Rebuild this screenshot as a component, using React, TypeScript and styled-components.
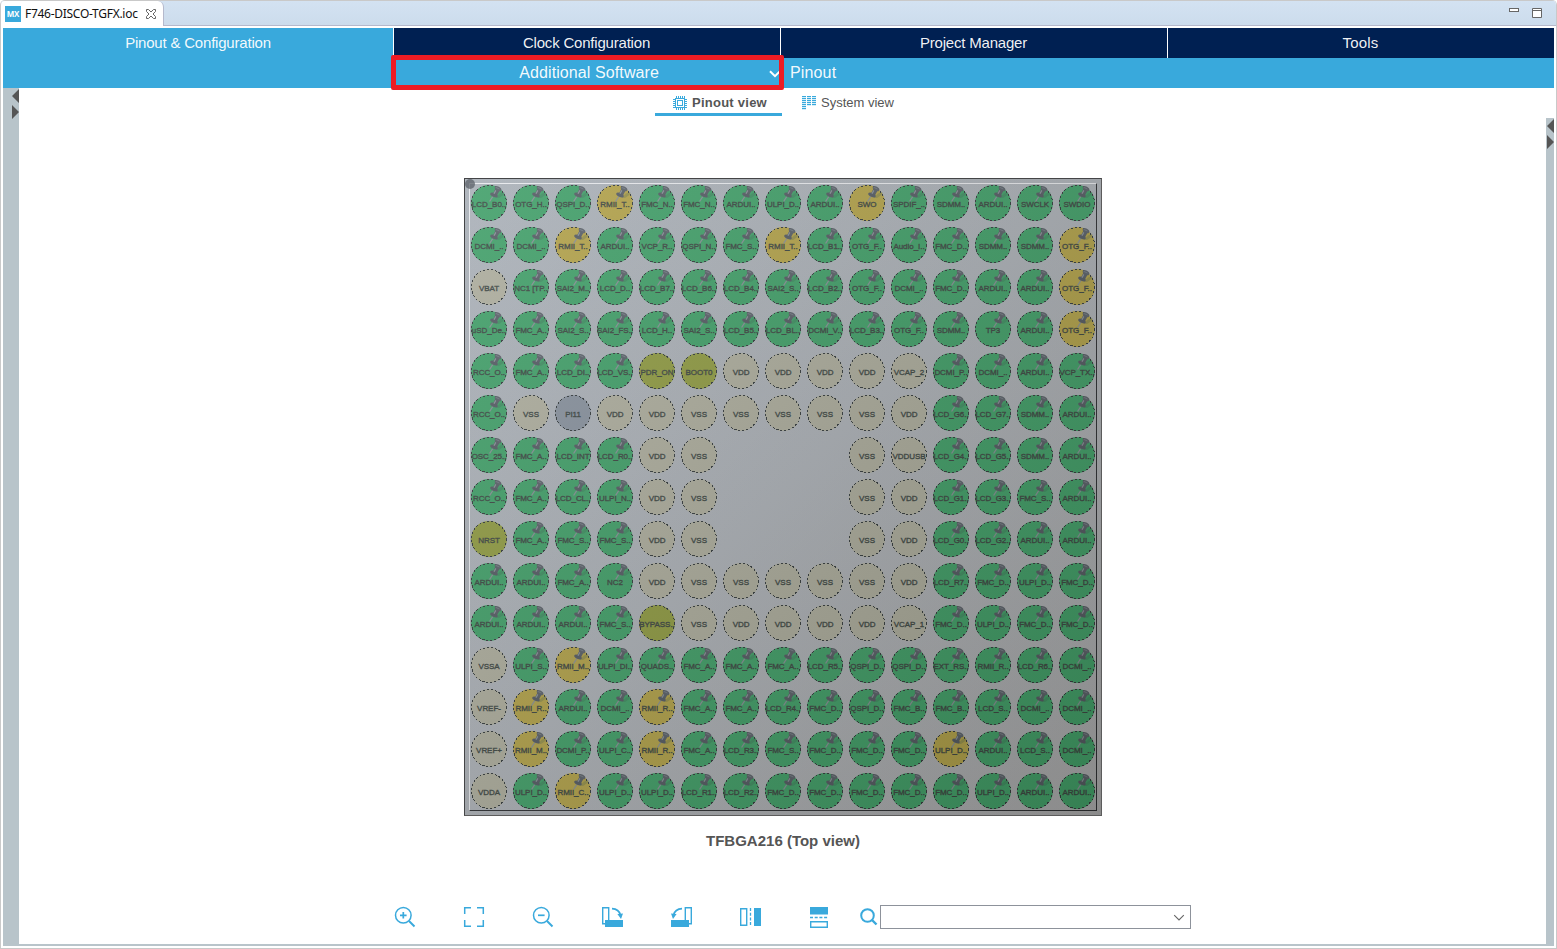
import React from 'react';
import styled, { createGlobalStyle } from 'styled-components';

const BLUE = '#39a9dc';
const NAVY = '#002052';
const RAIL = '#b8c4ca';

const GlobalStyle = createGlobalStyle`
  * { box-sizing: border-box; }
  html, body { margin: 0; padding: 0; height: 100%; background: #fff; overflow: hidden; }
  body { font-family: "Liberation Sans", Arial, sans-serif; }
  #root { height: 100%; }
  svg { display: block; flex: none; }
`;

const Frame = styled.div`
  width: 1557px;
  height: 949px;
  display: flex;
  flex-direction: column;
  border: 1px solid #c9c9c9;
  border-top: 0;
  border-radius: 5px 5px 0 0;
  background: #fff;
  overflow: hidden;
`;

const TabStrip = styled.header`
  height: 26px;
  flex: none;
  display: flex;
  align-items: flex-start;
  justify-content: space-between;
  border-top: 1px solid #c9c9c9;
  border-bottom: 1px solid #b5b9cc;
  background: linear-gradient(#d3e2f2, #ccdcec);
`;

const FileTab = styled.div`
  width: 163px;
  height: 25px;
  display: flex;
  align-items: center;
  padding-left: 4px;
  border-right: 1px solid #b5b9cc;
  border-radius: 4px 6px 0 0;
  background: #fff;
  font: 12px/24px "Noto Sans", sans-serif;
  letter-spacing: -0.28px;
  color: #111;
  white-space: nowrap;
`;

const FileLogo = styled.span`
  width: 16px;
  height: 16px;
  margin-right: 4px;
  flex: none;
  background: ${BLUE};
  color: #fff;
  font: bold 8px/16px "Open Sans", sans-serif;
  letter-spacing: -0.2px;
  text-align: center;
`;

const FileName = styled.span`
  width: 120px;
`;

const WindowButtons = styled.div`
  display: flex;
  gap: 13px;
  padding: 7px 14px 0 0;
`;

const Content = styled.div`
  flex: 1;
  display: flex;
  flex-direction: column;
  margin: 2px 2px 2px 2px;
  border-bottom: 2px solid ${RAIL};
  position: relative;
`;

const MainNav = styled.nav`
  height: 30px;
  flex: none;
  display: grid;
  grid-template-columns: 390px 386px 386px 386px;
  column-gap: 1px;
`;

const NavItem = styled.div<{ $active?: boolean }>`
  background: ${(p) => (p.$active ? BLUE : NAVY)};
  color: rgba(255, 255, 255, 0.94);
  font-size: 15px;
  line-height: 30px;
  letter-spacing: -0.2px;
  text-align: center;
  padding-right: ${(p) => (p.$active ? 0 : 1)}px;

  &:last-child {
    letter-spacing: 0.2px;
  }
`;

const SubNav = styled.div`
  height: 30px;
  flex: none;
  display: grid;
  grid-template-columns: 390px 387px 1fr;
  background: ${BLUE};
  color: rgba(255, 255, 255, 0.96);
  font-size: 16px;
  line-height: 29px;
`;

const SubMenu = styled.div`
  height: 29px;
  display: flex;
  align-items: center;
  justify-content: flex-end;
  gap: 110px;
  letter-spacing: 0.1px;
  overflow: hidden;

  svg {
    margin-top: 3px;
  }
`;

const SubLabel = styled.div`
  padding-left: 10px;
  letter-spacing: 0.15px;
`;

const Highlight = styled.div`
  position: absolute;
  left: 388px;
  top: 27px;
  width: 393px;
  height: 35px;
  border: 5px solid #ed1c24;
  border-radius: 2px;
`;

const Body = styled.div`
  flex: 1;
  display: flex;
`;

const Rail = styled.aside<{ $right?: boolean }>`
  width: ${(p) => (p.$right ? 8 : 16)}px;
  margin-top: ${(p) => (p.$right ? 30 : 0)}px;
  flex: none;
  display: flex;
  justify-content: flex-end;
  background: ${RAIL};
`;

const Main = styled.main`
  flex: 1;
  display: flex;
  flex-direction: column;
  align-items: center;
`;

const ViewTabs = styled.div`
  width: 1527px;
  height: 28px;
  padding-left: 636px;
  display: flex;
  gap: 2px;
`;

const ViewTab = styled.div<{ $active?: boolean }>`
  width: ${(p) => (p.$active ? 127 : 130)}px;
  height: 28px;
  display: flex;
  align-items: center;
  gap: 5px;
  padding: 5px 0 0 18px;
  border-bottom: 3px solid ${(p) => (p.$active ? BLUE : 'transparent')};
  color: #555;
  font-size: 13px;
  line-height: 20px;
  font-weight: ${(p) => (p.$active ? 'bold' : 'normal')};
  letter-spacing: ${(p) => (p.$active ? 0.25 : 0)}px;
`;

const Chip = styled.div`
  width: 638px;
  height: 638px;
  margin: 62px 0 0 1px;
  padding: 4px;
  border: 1px solid #444547;
  border-right-color: #5c5c5c;
  border-bottom-color: #5c5c5c;
  background: linear-gradient(135deg, #aeb5ba 0%, #b2b7bb 50%, #b3b3b3 100%);
  position: relative;
`;

const BallGrid = styled.div`
  width: 628px;
  height: 628px;
  padding: 1px 0 0 1px;
  display: grid;
  grid-template-columns: repeat(15, 36px);
  grid-auto-rows: 36px;
  gap: 6px;
  border: 1px solid;
  border-color: #eff1f2 #2c2e30 #2c2e30 #eff1f2;
`;

const CornerMark = styled.div`
  position: absolute;
  left: 0;
  top: 0;
  width: 10px;
  height: 10px;
  border-radius: 50%;
  background: rgba(75, 81, 87, 0.75);
`;

const Shade = styled.div`
  position: absolute;
  inset: 0;
  background: linear-gradient(135deg, rgba(200, 200, 220, 0.14) 0%, rgba(20, 20, 20, 0.25) 100%);
  pointer-events: none;
`;

type Kind = 'pinned' | 'warn' | 'power' | 'system' | 'free';

const FILL: Record<Kind, string> = {
  pinned: '#41a468',
  warn: '#b8a748',
  power: '#b2b29f',
  system: '#939f40',
  free: '#8b959f',
};

const Ball = styled.div<{ $kind: Kind }>`
  position: relative;
  width: 36px;
  height: 36px;
  border-radius: 50%;
  background: ${(p) => FILL[p.$kind]};
`;

const Outline = styled.svg`
  position: absolute;
  inset: 0;
`;

const PinMark = styled.svg`
  position: absolute;
  left: 17px;
  top: 0;
`;

const BallLabel = styled.span`
  position: absolute;
  left: -1px;
  top: 13.5px;
  width: 38px;
  height: 11px;
  display: flex;
  justify-content: center;
  overflow: hidden;
  color: #3c463f;
  font-size: 8px;
  line-height: 11px;
  letter-spacing: -0.05px;
  -webkit-text-stroke: 0.35px #3c463f;
  white-space: nowrap;
`;

const ChipName = styled.div`
  margin: 16px 0 0 1px;
  color: #555;
  font-size: 15px;
  line-height: 18px;
  font-weight: bold;
`;

const Toolbar = styled.div`
  width: 1527px;
  height: 24px;
  margin-top: 55px;
  padding-left: 375px;
  display: flex;
  align-items: center;
`;

const ToolButton = styled.div`
  width: 69px;
  height: 22px;
`;

const SearchIcon = styled.div`
  width: 21px;
  padding: 0 0 0 1px;
  margin-left: -18px;
`;

const SearchBox = styled.div`
  width: 311px;
  height: 24px;
  display: flex;
  align-items: center;
  justify-content: flex-end;
  padding: 1px 5px 0 0;
  border: 1px solid #8d929b;
  background: #fff;
`;

/* Marks after a label: "!" = conflicting signal, "*" = supply, "~" = system, "?" = unused, "-" = no ball */
const ROWS = [
  'LCD_B0..,OTG_H..,QSPI_D..,RMII_T..!,FMC_N..,FMC_N..,ARDUI..,ULPI_D..,ARDUI..,SWO!,SPDIF_..,SDMM..,ARDUI..,SWCLK,SWDIO',
  'DCMI_..,DCMI_..,RMII_T..!,ARDUI..,VCP_R..,QSPI_N..,FMC_S..,RMII_T..!,LCD_B1..,OTG_F..,Audio_I..,FMC_D..,SDMM..,SDMM..,OTG_F..!',
  'VBAT*,NC1 [TP..,SAI2_M..,LCD_D..,LCD_B7..,LCD_B6..,LCD_B4..,SAI2_S..,LCD_B2..,OTG_F..,DCMI_..,FMC_D..,ARDUI..,ARDUI..,OTG_F..!',
  'uSD_De..,FMC_A..,SAI2_S..,SAI2_FS..,LCD_H..,SAI2_S..,LCD_B5..,LCD_BL..,DCMI_V..,LCD_B3..,OTG_F..,SDMM..,TP3,ARDUI..,OTG_F..!',
  'RCC_O..,FMC_A..,LCD_DI..,LCD_VS..,PDR_ON~,BOOT0~,VDD*,VDD*,VDD*,VDD*,VCAP_2*,DCMI_P..,DCMI_..,ARDUI..,VCP_TX..',
  'RCC_O..,VSS*,PI11?,VDD*,VDD*,VSS*,VSS*,VSS*,VSS*,VSS*,VDD*,LCD_G6..,LCD_G7..,SDMM..,ARDUI..',
  'OSC_25..,FMC_A..,LCD_INT,LCD_R0..,VDD*,VSS*,-,-,-,VSS*,VDDUSB*,LCD_G4..,LCD_G5..,SDMM..,ARDUI..',
  'RCC_O..,FMC_A..,LCD_CL..,ULPI_N..,VDD*,VSS*,-,-,-,VSS*,VDD*,LCD_G1..,LCD_G3..,FMC_S..,ARDUI..',
  'NRST~,FMC_A..,FMC_S..,FMC_S..,VDD*,VSS*,-,-,-,VSS*,VDD*,LCD_G0..,LCD_G2..,ARDUI..,ARDUI..',
  'ARDUI..,ARDUI..,FMC_A..,NC2,VDD*,VSS*,VSS*,VSS*,VSS*,VSS*,VDD*,LCD_R7..,FMC_D..,ULPI_D..,FMC_D..',
  'ARDUI..,ARDUI..,ARDUI..,FMC_S..,BYPASS..~,VSS*,VDD*,VDD*,VDD*,VDD*,VCAP_1*,FMC_D..,ULPI_D..,FMC_D..,FMC_D..',
  'VSSA*,ULPI_S..,RMII_M..!,ULPI_DI..,QUADS..,FMC_A..,FMC_A..,FMC_A..,LCD_R5..,QSPI_D..,QSPI_D..,EXT_RS..,RMII_R..,LCD_R6..,DCMI_..',
  'VREF-*,RMII_R..!,ARDUI..,DCMI_..,RMII_R..!,FMC_A..,FMC_A..,LCD_R4..,FMC_D..,QSPI_D..,FMC_B..,FMC_B..,LCD_S..,DCMI_..,DCMI_..',
  'VREF+*,RMII_M..!,DCMI_P..,ULPI_C..,RMII_R..!,FMC_A..,LCD_R3..,FMC_S..,FMC_D..,FMC_D..,FMC_D..,ULPI_D..!,ARDUI..,LCD_S..,DCMI_..',
  'VDDA*,ULPI_D..,RMII_C..!,ULPI_D..,ULPI_D..,LCD_R1..,LCD_R2..,FMC_D..,FMC_D..,FMC_D..,FMC_D..,FMC_D..,ULPI_D..,ARDUI..,ARDUI..',
];

const MARKS: Record<string, Kind> = { '!': 'warn', '*': 'power', '~': 'system', '?': 'free' };

function ChipBall({ code }: { code: string }) {
  if (code === '-') return <span />;
  const mark = MARKS[code.slice(-1)];
  const kind: Kind = mark ?? 'pinned';
  const label = mark ? code.slice(0, -1) : code;
  return (
    <Ball $kind={kind}>
      <Outline width="36" height="36">
        <circle cx="18" cy="18" r="17.5" fill="none" stroke="#343b3b" strokeWidth="1" strokeDasharray="2 2" shapeRendering="crispEdges" />
      </Outline>
      {(kind === 'pinned' || kind === 'warn') && (
        <PinMark width="18" height="18" viewBox="0 0 18 18">
          <path d="M8 12.5 L12 8.5 L16.5 7 L16 9.5 L11 13 Z" fill="#3b5a4a" opacity=".25" />
          <path d="M4.8 11.5 L1.6 16.5" stroke="#8b9297" strokeWidth="1.3" />
          <path d="M7.6 3.6 L11.6 5.4 L8.8 10.8 L4.8 8.8 Z" fill="#596066" />
          <ellipse cx="6" cy="10" rx="4" ry="2" transform="rotate(24 6 10)" fill="#555c62" />
          <ellipse cx="10" cy="3.6" rx="3.6" ry="2" transform="rotate(30 10 3.6)" fill="#5c6369" />
          <path d="M7.8 5.4 L6 8.8" stroke="#8c949a" strokeWidth="1.2" />
          <path d="M7.6 2.3 L11.4 4" stroke="#767e85" strokeWidth="1" />
        </PinMark>
      )}
      <BallLabel>{label}</BallLabel>
    </Ball>
  );
}

function RailArrows() {
  return (
    <svg width="8" height="32" viewBox="0 0 8 32">
      <path d="M8 1 L1 8 L8 15 Z M1 17 L8 24 L1 31 Z" fill="#555" />
    </svg>
  );
}

function ChipIcon() {
  return (
    <svg width="14" height="14" viewBox="0 0 14 14" fill="none" stroke={BLUE} shapeRendering="crispEdges">
      <rect x="2.5" y="2.5" width="9" height="9" />
      <rect x="4.5" y="4.5" width="5" height="5" />
      <path d="M3.5 0v2M5.5 0v2M7.5 0v2M9.5 0v2M11.5 0v2M3.5 12v2M5.5 12v2M7.5 12v2M9.5 12v2M11.5 12v2M0 3.5h2M0 5.5h2M0 7.5h2M0 9.5h2M0 11.5h2M12 3.5h2M12 5.5h2M12 7.5h2M12 9.5h2M12 11.5h2" />
    </svg>
  );
}

function SystemIcon() {
  const columns = [
    { x: 0, rows: 7 },
    { x: 5, rows: 5 },
    { x: 10, rows: 5 },
  ];
  return (
    <svg width="14" height="14" viewBox="0 0 14 14">
      {columns.flatMap(({ x, rows }) =>
        Array.from({ length: rows }, (_, i) => (
          <rect key={`${x}-${i}`} x={x} y={i * 2} width="4" height="1.2" fill={BLUE} />
        )),
      )}
    </svg>
  );
}

function ZoomIcon({ plus }: { plus?: boolean }) {
  return (
    <svg width="22" height="22" viewBox="0 0 22 22" fill="none" stroke={BLUE} strokeWidth="1.5">
      <circle cx="9.3" cy="9.3" r="7.8" />
      <path d="M15 15 L20.5 20.5" strokeWidth="1.9" />
      <path d={plus ? 'M6 9.3h6.6M9.3 6v6.6' : 'M6 9.3h6.6'} strokeWidth="1.7" />
    </svg>
  );
}

function FitIcon() {
  return (
    <svg width="22" height="22" viewBox="0 0 22 22" fill="none" stroke={BLUE} strokeWidth="1.5">
      <path d="M1.7 8V1.7H8M14 1.7h6.3V8M20.3 14v6.3H14M8 20.3H1.7V14" />
    </svg>
  );
}

function RotateIcon({ left }: { left?: boolean }) {
  return (
    <svg width="23" height="22" viewBox="0 0 23 22">
      <g transform={left ? 'translate(23 0) scale(-1 1)' : undefined}>
        <path d="M1.7 1.7h6v16h-6z" fill="none" stroke={BLUE} strokeWidth="1.4" />
        <path d="M4 14h18v7H4z" fill={BLUE} />
        <path d="M11 2.6 Q18 3 19.5 9" fill="none" stroke={BLUE} strokeWidth="1.6" />
        <path d="M16.4 8 L22 7.4 L20 13 Z" fill={BLUE} />
      </g>
    </svg>
  );
}

function FlipHIcon() {
  return (
    <svg width="23" height="22" viewBox="0 0 23 22">
      <path d="M1.7 2.7h6v16.6h-6z" fill="none" stroke={BLUE} strokeWidth="1.4" />
      <path d="M11.5 2v18" stroke={BLUE} strokeWidth="1.3" strokeDasharray="3 1.7" />
      <path d="M15 2h7v18h-7z" fill={BLUE} />
    </svg>
  );
}

function FlipVIcon() {
  return (
    <svg width="22" height="23" viewBox="0 0 22 23">
      <path d="M2 1h18v7.5H2z" fill={BLUE} />
      <path d="M2 11.5h18" stroke={BLUE} strokeWidth="1.3" strokeDasharray="3 1.7" />
      <path d="M2.7 15.7h16.6v5.6H2.7z" fill="none" stroke={BLUE} strokeWidth="1.4" />
    </svg>
  );
}

export default function App() {
  return (
    <>
      <GlobalStyle />
      <Frame>
        <TabStrip>
          <FileTab>
            <FileLogo>MX</FileLogo>
            <FileName>F746-DISCO-TGFX.ioc</FileName>
            <svg width="12" height="12" viewBox="0 0 12 12" fill="#fff" stroke="#666" strokeWidth="1">
              <path d="M1.5 1.5h2L6 4l2.5-2.5h2v2L8 6l2.5 2.5v2h-2L6 8l-2.5 2.5h-2v-2L4 6 1.5 3.5z" />
            </svg>
          </FileTab>
          <WindowButtons>
            <svg width="10" height="10" viewBox="0 0 10 10">
              <rect x=".5" y=".5" width="9" height="3" fill="#fff" stroke="#666" />
            </svg>
            <svg width="10" height="10" viewBox="0 0 10 10">
              <path d="M.5.5h9v9h-9zM.5 2.5h9" fill="#fff" stroke="#666" />
            </svg>
          </WindowButtons>
        </TabStrip>
        <Content>
          <MainNav>
            <NavItem $active>Pinout &amp; Configuration</NavItem>
            <NavItem>Clock Configuration</NavItem>
            <NavItem>Project Manager</NavItem>
            <NavItem>Tools</NavItem>
          </MainNav>
          <SubNav>
            <span />
            <SubMenu>
              Additional Software
              <svg width="11" height="8" viewBox="0 0 11 8" fill="none" stroke="#fff" strokeWidth="2">
                <path d="M1 1.2 L6 6.2 L11 1.2" />
              </svg>
            </SubMenu>
            <SubLabel>Pinout</SubLabel>
          </SubNav>
          <Body>
            <Rail>
              <RailArrows />
            </Rail>
            <Main>
              <ViewTabs>
                <ViewTab $active>
                  <ChipIcon />
                  Pinout view
                </ViewTab>
                <ViewTab>
                  <SystemIcon />
                  System view
                </ViewTab>
              </ViewTabs>
              <Chip>
                <CornerMark />
                <BallGrid>
                  {ROWS.flatMap((row, r) => row.split(',').map((code, c) => <ChipBall key={`${r}-${c}`} code={code} />))}
                </BallGrid>
                <Shade />
              </Chip>
              <ChipName>TFBGA216 (Top view)</ChipName>
              <Toolbar>
                <ToolButton><ZoomIcon plus /></ToolButton>
                <ToolButton><FitIcon /></ToolButton>
                <ToolButton><ZoomIcon /></ToolButton>
                <ToolButton><RotateIcon /></ToolButton>
                <ToolButton><RotateIcon left /></ToolButton>
                <ToolButton><FlipHIcon /></ToolButton>
                <ToolButton><FlipVIcon /></ToolButton>
                <SearchIcon>
                  <svg width="18" height="18" viewBox="0 0 18 18" fill="none" stroke={BLUE} strokeWidth="2">
                    <circle cx="7.5" cy="7.5" r="6.3" />
                    <path d="M12 12 L16.5 16.5" strokeWidth="2.4" />
                  </svg>
                </SearchIcon>
                <SearchBox>
                  <svg width="12" height="8" viewBox="0 0 12 8" fill="none" stroke="#666" strokeWidth="1.1">
                    <path d="M1.2 1.2 L6 6 L10.8 1.2" />
                  </svg>
                </SearchBox>
              </Toolbar>
            </Main>
            <Rail $right>
              <RailArrows />
            </Rail>
          </Body>
          <Highlight />
        </Content>
      </Frame>
    </>
  );
}
